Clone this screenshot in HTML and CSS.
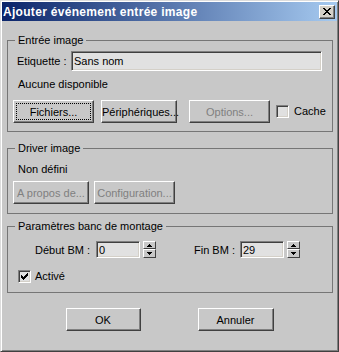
FILE: index.html
```html
<!DOCTYPE html>
<html lang="fr">
<head>
    <meta charset="UTF-8">
    <meta name="viewport" content="width=device-width, initial-scale=1.0">
    <title>Ajouter événement entrée image</title>
    <link rel="stylesheet" href="styles.css">
</head>
<body>
    <div class="window">
        <div class="titlebar">
            <span class="title">Ajouter événement entrée image</span>
            <span class="close-btn">
                <svg width="8" height="7" viewBox="0 0 8 7"><path d="M0 0h2v1h-2zM6 0h2v1h-2zM1 1h2v1h-2zM5 1h2v1h-2zM2 2h4v1h-4zM3 3h2v1h-2zM2 4h4v1h-4zM1 5h2v1h-2zM5 5h2v1h-2zM0 6h2v1h-2zM6 6h2v1h-2z" fill="#000"/></svg>
            </span>
        </div>

        <div class="content">
            <fieldset class="group group-input">
                <legend>Entrée image</legend>
                <div class="label-row">
                    <label class="label-name">Etiquette :</label>
                    <input type="text" class="edit label-edit" value="Sans nom">
                </div>
                <div class="status">Aucune disponible</div>
                <div class="button-row">
                    <button class="btn btn-focus btn-files">Fichiers...</button>
                    <button class="btn btn-devices">Périphériques...</button>
                    <button class="btn btn-options" disabled>Options...</button>
                    <label class="check check-cache"><span class="box"></span>Cache</label>
                </div>
            </fieldset>

            <fieldset class="group group-driver">
                <legend>Driver image</legend>
                <div class="status status-driver">Non défini</div>
                <div class="button-row">
                    <button class="btn btn-about" disabled>A propos de...</button>
                    <button class="btn btn-config" disabled>Configuration...</button>
                </div>
            </fieldset>

            <fieldset class="group group-range">
                <legend>Paramètres banc de montage</legend>
                <div class="spin-row">
                    <div class="spin-field spin-start">
                        <span class="spin-label">Début BM :</span>
                        <input type="text" class="edit spin-edit" value="0">
                        <span class="spinner">
                            <span class="spin-btn"><svg width="5" height="3" viewBox="0 0 5 3"><path d="M2 0h1v1h1v1h1v1h-5v-1h1v-1h1z" fill="#000"/></svg></span>
                            <span class="spin-btn"><svg width="5" height="3" viewBox="0 0 5 3"><path d="M0 0h5v1h-1v1h-1v1h-1v-1h-1v-1h-1z" fill="#000"/></svg></span>
                        </span>
                    </div>
                    <div class="spin-field spin-end">
                        <span class="spin-label">Fin BM :</span>
                        <input type="text" class="edit spin-edit" value="29">
                        <span class="spinner">
                            <span class="spin-btn"><svg width="5" height="3" viewBox="0 0 5 3"><path d="M2 0h1v1h1v1h1v1h-5v-1h1v-1h1z" fill="#000"/></svg></span>
                            <span class="spin-btn"><svg width="5" height="3" viewBox="0 0 5 3"><path d="M0 0h5v1h-1v1h-1v1h-1v-1h-1v-1h-1z" fill="#000"/></svg></span>
                        </span>
                    </div>
                </div>
                <label class="check check-active">
                    <span class="box"><svg width="7" height="7" viewBox="0 0 7 7"><path d="M6 0h1v1h-1zM5 1h2v1h-2zM0 2h1v1h-1zM4 2h3v1h-3zM0 3h2v1h-2zM3 3h3v1h-3zM0 4h5v1h-5zM1 5h3v1h-3zM2 6h1v1h-1z" fill="#000"/></svg></span>Activé
                </label>
            </fieldset>
        </div>

        <div class="footer">
            <button class="btn btn-ok">OK</button>
            <button class="btn btn-cancel">Annuler</button>
        </div>
    </div>
</body>
</html>
```

FILE: styles.css
```css
body {
    margin: 0;
    font-family: "Liberation Sans", Arial, sans-serif;
    font-size: 11px;
    color: #000;
}
.window {
    width: 339px;
    height: 352px;
    box-sizing: border-box;
    background-color: #c8c8c8;
    border: 1px solid;
    border-color: #dcdcdc #404040 #404040 #dcdcdc;
    padding: 1px;
    box-shadow: inset 1px 1px 0 #fff, inset -1px -1px 0 #808080;
}
.titlebar {
    height: 19px;
    display: flex;
    align-items: center;
    justify-content: space-between;
    padding: 0 2px 0 1px;
    background: linear-gradient(to right, #0a246a, #a6caf0);
    color: #fff;
    font-weight: bold;
    font-size: 12px;
}
.title {
    letter-spacing: 0.3px;
}
.close-btn {
    width: 16px;
    height: 14px;
    box-sizing: border-box;
    display: flex;
    align-items: center;
    justify-content: center;
    background-color: #d4d0c8;
    border: 1px solid;
    border-color: #fff #404040 #404040 #fff;
    box-shadow: inset -1px -1px 0 #808080;
}
.content {
    padding: 0 4px 0 5px;
}
.group {
    margin: 13px 0 0;
    padding: 4px 5px 8px 5px;
    border: 1px solid #767676;
    min-width: 0;
}
.group legend {
    margin-left: 2px;
    padding: 0 3px;
    line-height: 13px;
}
.group-driver {
    margin-top: 10px;
    padding: 8px 5px 9px 5px;
}
.group-range {
    margin-top: 6px;
    padding: 8px 5px 8px 5px;
}
.label-row {
    display: flex;
    align-items: center;
    height: 20px;
}
.label-name {
    flex: 0 0 54px;
    margin-left: 4px;
}
.edit {
    box-sizing: border-box;
    margin: 0;
    padding: 0 2px;
    font-family: inherit;
    font-size: 11px;
    color: #000;
    background-color: #e1e1e1;
    border: 1px solid;
    border-color: #808080 #fff #fff #808080;
    box-shadow: inset 1px 1px 0 #404040, inset -1px -1px 0 #d4d0c8;
    outline: none;
}
.label-edit {
    flex: 1;
    height: 20px;
    margin-right: 5px;
}
.status {
    margin: 7px 0 0 5px;
    line-height: 13px;
}
.status-driver {
    margin-top: 0;
}
.button-row {
    display: flex;
    align-items: center;
    margin-top: 9px;
}
.group-driver .button-row {
    margin-top: 5px;
}
.btn {
    height: 23px;
    box-sizing: border-box;
    margin: 0;
    padding: 0;
    font-family: inherit;
    font-size: 11px;
    color: #000;
    background-color: #c8c8c8;
    border: 1px solid;
    border-color: #fff #404040 #404040 #fff;
    box-shadow: inset -1px -1px 0 #808080;
    cursor: pointer;
}
.btn:disabled {
    color: #808080;
    cursor: default;
}
.btn-focus {
    outline: 1px dotted #000;
    outline-offset: -4px;
}
.btn-files {
    width: 81px;
}
.btn-devices {
    width: 76px;
    margin-left: 7px;
}
.btn-options {
    width: 81px;
    margin-left: 12px;
}
.btn-about {
    width: 76px;
}
.btn-config {
    width: 81px;
    margin-left: 5px;
}
.check {
    display: flex;
    align-items: center;
    line-height: 13px;
}
.box {
    width: 13px;
    height: 13px;
    box-sizing: border-box;
    display: flex;
    align-items: center;
    justify-content: center;
    margin-right: 5px;
    background-color: #e0e0e0;
    border: 1px solid;
    border-color: #808080 #fff #fff #808080;
    box-shadow: inset 1px 1px 0 #404040, inset -1px -1px 0 #d4d0c8;
}
.check-cache {
    margin-left: 6px;
}
.check-active {
    height: 15px;
    margin: 11px 0 0 5px;
}
.check-active .box {
    margin-right: 4px;
}
.spin-row {
    display: flex;
    align-items: center;
    height: 17px;
}
.spin-field {
    display: flex;
    align-items: center;
}
.spin-start {
    margin-left: 22px;
}
.spin-start .spin-label {
    width: 61px;
}
.spin-end {
    margin-left: 38px;
}
.spin-end .spin-label {
    width: 46px;
}
.spin-edit {
    width: 44px;
    height: 17px;
}
.spinner {
    display: flex;
    flex-direction: column;
    margin-left: 3px;
}
.spin-btn {
    width: 13px;
    height: 8px;
    box-sizing: border-box;
    display: flex;
    align-items: center;
    justify-content: center;
    background-color: #c8c8c8;
    border: 1px solid;
    border-color: #fff #404040 #404040 #fff;
}
.spin-btn + .spin-btn {
    height: 9px;
}
.footer {
    display: flex;
    justify-content: center;
    gap: 57px;
    margin-top: 15px;
}
.btn-ok {
    width: 75px;
}
.btn-cancel {
    width: 76px;
}
```
